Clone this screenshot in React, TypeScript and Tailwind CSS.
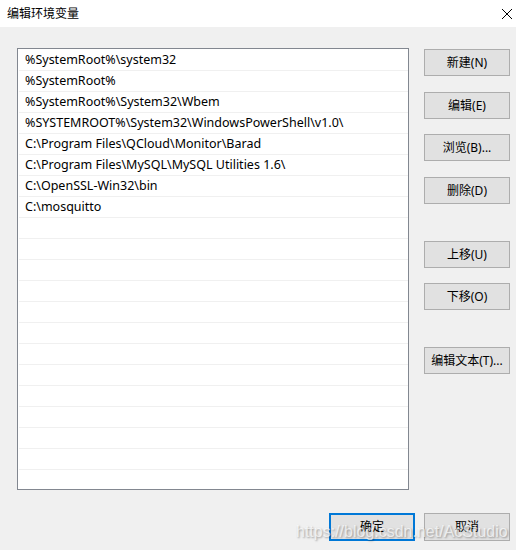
const paths = [
  '%SystemRoot%\\system32',
  '%SystemRoot%',
  '%SystemRoot%\\System32\\Wbem',
  '%SYSTEMROOT%\\System32\\WindowsPowerShell\\v1.0\\',
  'C:\\Program Files\\QCloud\\Monitor\\Barad',
  'C:\\Program Files\\MySQL\\MySQL Utilities 1.6\\',
  'C:\\OpenSSL-Win32\\bin',
  'C:\\mosquitto',
];

const ROW_COUNT = 20;

const font = { fontFamily: '"Noto Sans", "Noto Sans CJK SC", sans-serif' };

const Button = ({ label, className = '' }: { label: string; className?: string }) => (
  <div
    className={`w-[86px] h-[27px] flex items-center justify-center bg-[#e1e1e1] border border-[#adadad] text-[12px] text-black ${className}`}
  >
    {label}
  </div>
);

const App = () => {
  const rows = Array.from({ length: ROW_COUNT }, (_, i) => paths[i] ?? '');

  return (
    <div className="w-[516px] h-[550px] flex flex-col bg-[#f0f0f0] overflow-hidden" style={font}>
      {/* Title bar */}
      <div className="h-[27px] bg-white flex items-center justify-between pl-[7px] pr-[2px]">
        <span className="text-[12px] text-black leading-none">编辑环境变量</span>
        <svg width="12" height="12" viewBox="0 0 12 12" className="mr-[1px]">
          <path d="M1 1L11 11M11 1L1 11" stroke="#000" strokeWidth="1" fill="none" />
        </svg>
      </div>

      {/* Body */}
      <div className="relative flex-1 pt-[21px] pl-[17px]">
        <div className="flex gap-[15px]">
          {/* Path list */}
          <div className="w-[392px] h-[442px] border border-[#828790] bg-white pt-px overflow-hidden">
            {rows.map((p, i) => (
              <div
                key={i}
                className="h-[21px] ml-px border-b border-[#f0f0f0] pl-[6px] pt-px flex items-center text-[12.5px] text-black whitespace-nowrap"
              >
                {p}
              </div>
            ))}
          </div>

          {/* Side buttons */}
          <div className="flex flex-col pt-px">
            <Button label="新建(N)" />
            <Button label="编辑(E)" className="mt-[16px]" />
            <Button label="浏览(B)..." className="mt-[15px]" />
            <Button label="删除(D)" className="mt-[16px]" />
            <Button label="上移(U)" className="mt-[37px]" />
            <Button label="下移(O)" className="mt-[15px]" />
            <Button label="编辑文本(T)..." className="mt-[37px]" />
          </div>
        </div>

        {/* Dialog buttons */}
        <div className="flex justify-end gap-[9px] pr-[6px] mt-[23px]">
          <div className="w-[86px] h-[28px] flex items-center justify-center bg-[#e1e1e1] border-2 border-[#0078d7] text-[12px] text-black">
            确定
          </div>
          <Button label="取消" className="h-[28px]" />
        </div>

        <span
          className="absolute left-[296px] bottom-[6px] text-[16px] text-white/70 [text-shadow:1px_1px_2px_rgba(0,0,0,0.35)] pointer-events-none"
          style={{ fontFamily: '"Liberation Sans", Arial, sans-serif' }}
        >
          https://blog.csdn.net/AcStudio
        </span>
      </div>
    </div>
  );
};

export default App;
